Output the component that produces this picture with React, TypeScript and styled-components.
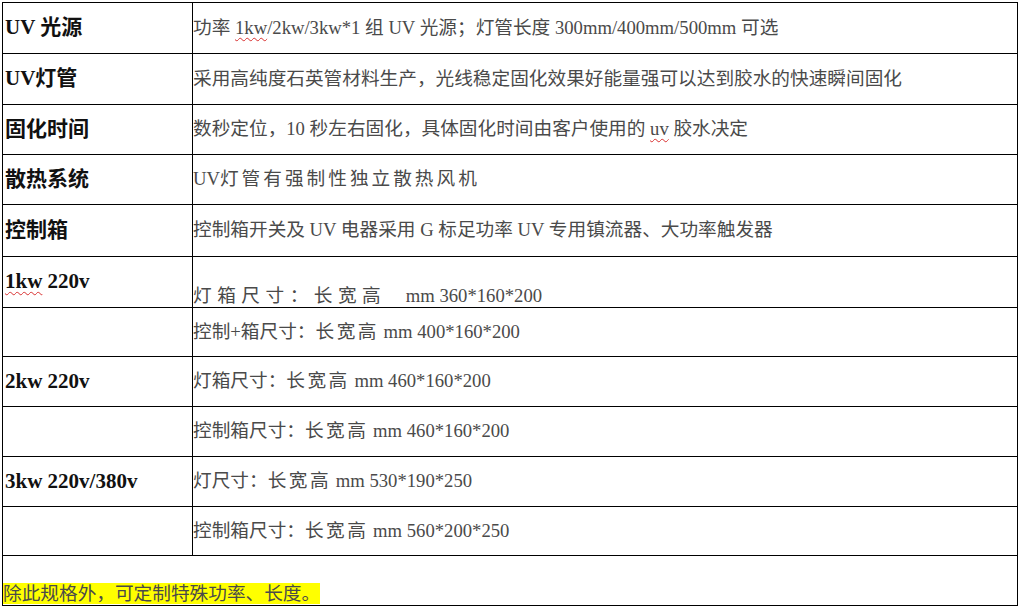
import React from "react";
import styled, { createGlobalStyle } from "styled-components";

type Align = "middle" | "bottom";

interface SpecRow {
  height: number;
  label?: React.ReactNode;
  value: React.ReactNode;
  valueAlign?: Align;
}

const GlobalStyle = createGlobalStyle`
  html, body {
    margin: 0;
    padding: 0;
    background: #fff;
  }
  body {
    font-family: "Liberation Serif", "Noto Sans CJK SC", serif;
  }
`;

const Page = styled.div`
  padding: 2px 0 0 2px;
`;

const SpecTable = styled.table`
  width: 1016px;
  border-collapse: collapse;
  table-layout: fixed;
`;

const Row = styled.tr<{ $h: number }>`
  height: ${(p) => p.$h}px;
`;

const Cell = styled.td<{ $align?: Align }>`
  border: 1px solid #000;
  padding: 0;
  white-space: nowrap;
  line-height: 1.2;
  vertical-align: ${(p) => p.$align ?? "middle"};
`;

const LabelCell = styled(Cell)`
  width: 187px;
  padding-left: 2px;
  font-size: 21px;
  font-weight: 700;
  color: #111;
`;

const ValueCell = styled(Cell)`
  font-size: 18.67px;
  color: #4a4a4a;
`;

const NoteCell = styled(Cell)`
  font-size: 18.67px;
  color: #4a4a4a;
  vertical-align: bottom;
`;

const Spaced = styled.span<{ $gap: number }>`
  letter-spacing: ${(p) => p.$gap}px;
`;

const Misspelt = styled.span`
  text-decoration: underline wavy #d83030;
  text-decoration-thickness: 1px;
  text-underline-offset: 3px;
  text-decoration-skip-ink: none;
`;

const Highlight = styled.span`
  background: #ffff00;
`;

const rows: SpecRow[] = [
  {
    height: 51,
    label: "UV 光源",
    value: (
      <>
        功率 <Misspelt>1kw</Misspelt>/2kw/3kw*1 组 UV 光源；灯管长度 300mm/400mm/500mm 可选
      </>
    ),
  },
  {
    height: 51,
    label: "UV灯管",
    value: "采用高纯度石英管材料生产，光线稳定固化效果好能量强可以达到胶水的快速瞬间固化",
  },
  {
    height: 50,
    label: "固化时间",
    value: (
      <>
        数秒定位，10 秒左右固化，具体固化时间由客户使用的 <Misspelt>uv</Misspelt> 胶水决定
      </>
    ),
  },
  {
    height: 50,
    label: "散热系统",
    value: (
      <>
        UV<Spaced $gap={3}>灯管有强制性独立散热风机</Spaced>
      </>
    ),
  },
  {
    height: 52,
    label: "控制箱",
    value: "控制箱开关及 UV 电器采用 G 标足功率 UV 专用镇流器、大功率触发器",
  },
  {
    height: 51,
    label: (
      <>
        <Misspelt>1kw</Misspelt> 220v
      </>
    ),
    value: (
      <>
        <Spaced $gap={5.5}>灯箱尺寸：长宽高 </Spaced>{"\u00a0\u00a0"}mm 360*160*200
      </>
    ),
    valueAlign: "bottom",
  },
  {
    height: 49,
    value: (
      <>
        控制+箱尺寸：<Spaced $gap={2.5}>长宽高</Spaced> mm 400*160*200
      </>
    ),
  },
  {
    height: 50,
    label: "2kw 220v",
    value: (
      <>
        灯箱尺寸：<Spaced $gap={2.5}>长宽高</Spaced> mm 460*160*200
      </>
    ),
  },
  {
    height: 50,
    value: (
      <>
        控制箱尺寸：<Spaced $gap={2.5}>长宽高</Spaced> mm 460*160*200
      </>
    ),
  },
  {
    height: 50,
    label: "3kw 220v/380v",
    value: (
      <>
        灯尺寸：<Spaced $gap={2.5}>长宽高</Spaced> mm 530*190*250
      </>
    ),
  },
  {
    height: 49,
    value: (
      <>
        控制箱尺寸：<Spaced $gap={2.5}>长宽高</Spaced> mm 560*200*250
      </>
    ),
  },
];

export default function App() {
  return (
    <Page>
      <GlobalStyle />
      <SpecTable>
        <tbody>
          {rows.map((row, i) => (
            <Row key={i} $h={row.height}>
              <LabelCell>{row.label}</LabelCell>
              <ValueCell $align={row.valueAlign}>{row.value}</ValueCell>
            </Row>
          ))}
          <Row $h={50}>
            <NoteCell colSpan={2}>
              <Highlight>除此规格外，可定制特殊功率、长度。</Highlight>
            </NoteCell>
          </Row>
        </tbody>
      </SpecTable>
    </Page>
  );
}
